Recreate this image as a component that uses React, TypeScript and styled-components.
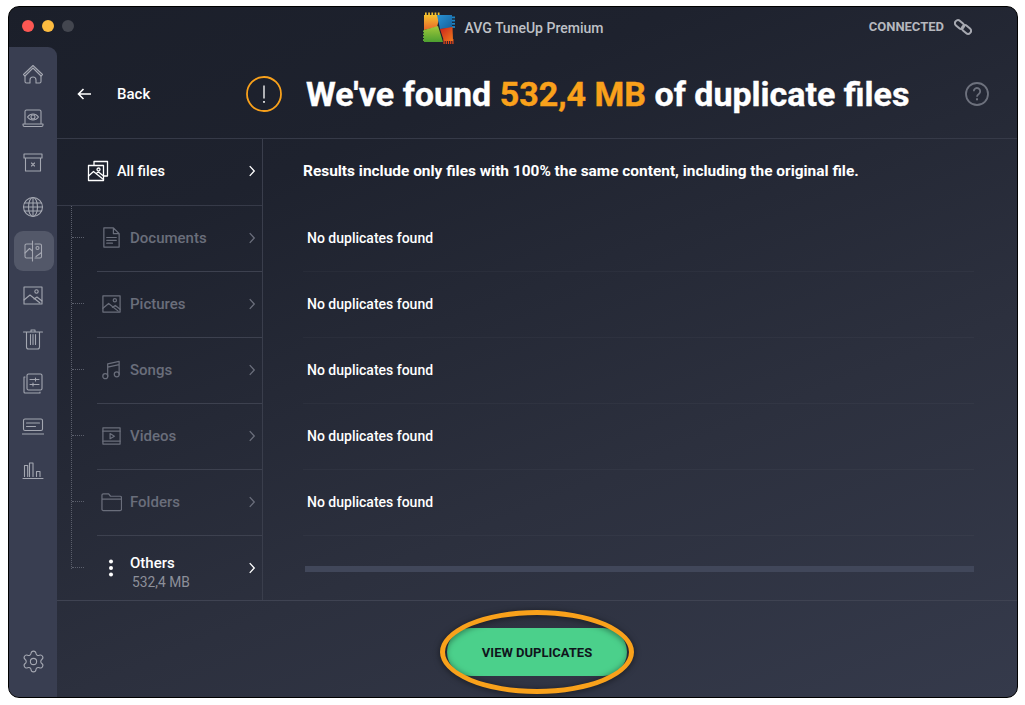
import React from "react";
import styled, { createGlobalStyle } from "styled-components";
import { Settings } from "lucide-react";

const Global = createGlobalStyle`
  html, body { margin: 0; padding: 0; background: #fff; }
  body { width: 1025px; height: 705px; overflow: hidden; font-family: Roboto, "Liberation Sans", sans-serif; }
  *, *::before, *::after { box-sizing: border-box; }
`;

const Page = styled.div`
  width: 1025px;
  height: 705px;
  padding: 6px 7px 7px 8px;
`;
const Win = styled.div`
  position: relative;
  width: 1010px;
  height: 692px;
  border: 1px solid #000;
  border-radius: 11px;
  overflow: hidden;
  display: flex;
  flex-direction: column;
  background: linear-gradient(158deg, #1b1f2a 0%, #1e222e 25%, #2c303e 65%, #353a4b 100%);
`;
const TitleBar = styled.div`
  height: 40px;
  flex: none;
  display: grid;
  grid-template-columns: 1fr auto 1fr;
  align-items: center;
`;
const Lights = styled.div`
  display: flex;
  gap: 8px;
  padding: 0 0 2px 13px;
`;
const Light = styled.span<{ $c: string }>`
  width: 12px;
  height: 12px;
  border-radius: 50%;
  background: ${(p) => p.$c};
`;
const Brand = styled.div`
  display: flex;
  align-items: center;
  gap: 10px;
  padding-top: 2px;
  font-size: 14px;
  font-weight: 500;
  color: #bfc1c7;
`;
const Status = styled.div`
  display: flex;
  justify-content: flex-end;
  align-items: center;
  gap: 10px;
  padding: 0 45px 1px 0;
  font-size: 13px;
  font-weight: 700;
  color: #b6b8be;
`;
const Body = styled.div`
  flex: 1;
  display: flex;
  min-height: 0;
`;
const Sidebar = styled.nav`
  width: 48px;
  flex: none;
  display: flex;
  flex-direction: column;
  align-items: center;
  gap: 4px;
  padding: 8px 0 16px 2px;
  background: #393e51;
  border-top-right-radius: 9px;
`;
const NavItem = styled.div<{ $active?: boolean }>`
  width: 40px;
  height: 40px;
  flex: none;
  display: flex;
  align-items: center;
  justify-content: center;
  padding-right: 2px;
  border-radius: 9px;
  color: #a4a7b1;
  background: ${(p) => (p.$active ? "#535869" : "transparent")};
`;
const NavBottom = styled(NavItem)`
  margin-top: auto;
`;
const Main = styled.div`
  flex: 1;
  min-width: 0;
  display: flex;
  flex-direction: column;
`;
const Header = styled.header`
  height: 92px;
  flex: none;
  display: flex;
  align-items: center;
  padding-top: 2px;
  border-bottom: 1px solid #363a48;
  color: #fff;
`;
const Back = styled.div`
  width: 189px;
  flex: none;
  display: flex;
  align-items: center;
  gap: 26px;
  padding-left: 20px;
  font-size: 15px;
  font-weight: 500;
`;
const Title = styled.h1`
  flex: 1;
  margin: 0 0 0 24px;
  font-size: 34px;
  line-height: 40px;
  font-weight: 700;
  white-space: nowrap;
  -webkit-text-stroke: 0.4px currentColor;
`;
const Accent = styled.span`
  color: #f9a11b;
`;
const Help = styled.div`
  margin-right: 28px;
  display: flex;
`;
const Content = styled.div`
  height: 461px;
  flex: none;
  display: flex;
`;
const Files = styled.div`
  width: 206px;
  flex: none;
  border-right: 1px solid #3a3e4c;
  display: flex;
  flex-direction: column;
`;
const AllRow = styled.div`
  height: 67px;
  flex: none;
  display: flex;
  align-items: center;
  padding: 0 6px 2px 30px;
  gap: 8px;
  color: #fff;
  font-size: 14.5px;
  font-weight: 500;
  border-bottom: 1px solid #363a48;
`;
const SubList = styled.div`
  position: relative;
  flex: 1;
  display: flex;
  flex-direction: column;
  &::before {
    content: "";
    position: absolute;
    left: 14px;
    top: 0;
    bottom: 33px;
    border-left: 1px dotted #5b5f6c;
  }
`;
const SubRow = styled.div<{ $on?: boolean }>`
  position: relative;
  height: 66px;
  flex: none;
  margin-left: 40px;
  padding: 0 6px 2px 5px;
  display: flex;
  align-items: center;
  gap: 10px;
  font-size: 15px;
  font-weight: 500;
  color: ${(p) => (p.$on ? "#fff" : "#6a6e7b")};
  border-bottom: ${(p) => (p.$on ? "none" : "1px solid #3d414f")};
  &::before {
    content: "";
    position: absolute;
    left: -25px;
    width: 12px;
    top: 31px;
    border-top: 1px dotted #5b5f6c;
  }
`;
const IconBox = styled.span`
  width: 18px;
  flex: none;
  display: flex;
  justify-content: center;
  & > svg {
    flex: none;
  }
`;
const Grow = styled.div`
  flex: 1;
`;
const OthersLabel = styled(Grow)`
  margin-top: 8px;
`;
const Size = styled.div`
  margin: 2px 0 0 2px;
  font-size: 13.8px;
  color: #8d909a;
  font-weight: 400;
`;
const Results = styled.div`
  flex: 1;
  min-width: 0;
  padding: 0 43px 0 40px;
  display: flex;
  flex-direction: column;
  color: #fff;
`;
const Note = styled.div`
  height: 67px;
  flex: none;
  display: flex;
  align-items: center;
  padding-bottom: 4px;
  font-size: 15.43px;
  font-weight: 700;
  white-space: nowrap;
`;
const ResultRow = styled.div`
  height: 66px;
  flex: none;
  display: flex;
  align-items: center;
  padding: 0 0 2px 4px;
  font-size: 14px;
  font-weight: 500;
  border-bottom: 1px solid rgba(255, 255, 255, 0.03);
`;
const Track = styled.div`
  height: 6px;
  margin: 30px 0 0 2px;
  background: #41475a;
`;
const Footer = styled.footer`
  flex: 1;
  display: flex;
  align-items: center;
  justify-content: center;
  padding-top: 6px;
  border-top: 1px solid #3f4352;
`;
const CTA = styled.div`
  position: relative;
  width: 180px;
  height: 48px;
  border-radius: 24px;
  background: #4bd08b;
  color: #10151c;
  font-size: 13px;
  font-weight: 700;
  display: flex;
  align-items: center;
  justify-content: center;
  &::after {
    content: "";
    position: absolute;
    left: -7px;
    top: -18px;
    width: 194px;
    height: 84px;
    border: 5px solid #f9a11b;
    border-radius: 50%;
    filter: drop-shadow(0 1px 3px rgba(0, 0, 0, 0.55));
  }
`;

const paths: Record<string, React.ReactNode> = {
  home: (
    <>
      <path d="M1.500 10.500 11 1.500l9.500 9L19 12l-8-8-8 8z" />
      <path d="M3 12v5.500A1.500 1.500 0 0 0 4.500 19H8v-3a3 3 0 0 1 6 0v3h3.500a1.500 1.500 0 0 0 1.500-1.500V12" />
    </>
  ),
  scan: (
    <>
      <path d="M3 15V3.500A1.500 1.500 0 0 1 4.500 2h13A1.500 1.500 0 0 1 19 3.500V15M1 16h20v1a1.500 1.500 0 0 1-1.500 1.500h-17A1.500 1.500 0 0 1 1 17z" />
      <path d="M5.500 9C7 7 9 6 11 6s4 1 5.500 3c-1.500 2-3.500 3-5.500 3s-4-1-5.500-3z" />
      <circle cx="11" cy="9" r="2" />
    </>
  ),
  box: (
    <>
      <path d="M2 2h18v4H2zM3.500 6v13h15V6" />
      <path d="M9.500 11l3 3M12.500 11l-3 3" />
    </>
  ),
  globe: (
    <>
      <circle cx="11" cy="11" r="9.500" />
      <ellipse cx="11" cy="11" rx="4.500" ry="9.500" />
      <path d="M11 1.500v19M2.500 7h17M1.500 11h19M2.500 15h17" />
    </>
  ),
  dup: (
    <>
      <path d="M10.500 1v20M10.500 4H4.500A1.500 1.500 0 0 0 3 5.500v11A1.500 1.500 0 0 0 4.500 18h6M13 4h5a1.500 1.500 0 0 1 1.500 1.500v11A1.500 1.500 0 0 1 18 18h-5" />
      <circle cx="15.500" cy="8" r="1.500" />
      <path d="M3 13l4.500-4.500 3 2.500M14 16.500l5.500-4" />
    </>
  ),
  photo: (
    <>
      <rect x="2" y="3" width="18" height="17" />
      <circle cx="14.500" cy="7.500" r="1.700" />
      <path d="M2 16l6-5 10 8M12 15l3-2 5 4" />
    </>
  ),
  trash: (
    <>
      <path d="M1.500 4h19M9 4V2h4v2M4.500 4v15a2 2 0 0 0 2 2h9a2 2 0 0 0 2-2V4" />
      <path d="M8.500 6.500v10M11 6.500v10M13.500 6.500v10" />
    </>
  ),
  tune: (
    <>
      <path d="M3 5H2v15a1 1 0 0 0 1 1h15v-1" />
      <rect x="5" y="2" width="15" height="16" rx="1.500" />
      <path d="M8 7.500h9M8 12.500h9M13.500 6v3M11 11v3" />
    </>
  ),
  laptop: (
    <>
      <rect x="1.500" y="3" width="19" height="11.500" rx="1.500" />
      <path d="M4.500 7h13M4.500 10.500h9M0 18h22" />
    </>
  ),
  bars: <path d="M1 18.500h20M2.500 16.500V5.500h3.200v11M7.500 16.500V3H11v13.500M14.500 16.500v-5h3.500v5" />,
  doc: (
    <>
      <path d="M13 1H3v20h16V7zM13 1v6h6" />
      <path d="M6 11h10M6 14h10M6 17h6" />
    </>
  ),
  song: (
    <>
      <path d="M7 18V5l12-2.500V16M7 8.500l12-2.500" />
      <circle cx="4.500" cy="18" r="2.600" />
      <circle cx="16.500" cy="16" r="2.600" />
    </>
  ),
  video: (
    <>
      <rect x="2" y="3" width="18" height="17" />
      <path d="M2 6.500h18M2 17h18M9.500 9v5.500l4.500-2.700z" />
    </>
  ),
  folder: <path d="M1 19V4.500A1.500 1.500 0 0 1 2.500 3H8l2 2.500h10A1.500 1.500 0 0 1 21.500 7v12A1.500 1.500 0 0 1 20 20.500H2.500A1.500 1.500 0 0 1 1 19zM1 8.500h20.500" />,
  all: (
    <>
      <path d="M7 5V1.500h13.500V16H17" />
      <rect x="1.500" y="5.500" width="15" height="15" />
      <circle cx="11.500" cy="9.500" r="1.500" />
      <path d="M1.500 16l5-4.500 10 8M9 13.500l2.500-1.500 5 4" />
    </>
  ),
  chevron: <path d="M2 1.500 8 8l-6 6.500" />,
};

const Icon = ({ name, size = 22, w = 1.1 }: { name: string; size?: number; w?: number }) => (
  <svg width={size} height={size} viewBox="0 0 22 22" fill="none" stroke="currentColor" strokeWidth={w} strokeLinejoin="round" strokeLinecap="round">
    {paths[name]}
  </svg>
);

const Chevron = () => (
  <svg width="8" height="12" viewBox="0 0 10 16" fill="none" stroke="currentColor" strokeWidth="1.800">
    {paths.chevron}
  </svg>
);

const LogoTeeth = ({ pts, c }: { pts: number[][]; c: string }) => (
  <>
    {pts.map(([x, y, w, h], i) => (
      <rect key={i} x={x} y={y} width={w} height={h} fill={c} />
    ))}
  </>
);

const AvgLogo = () => {
  const range = (n: number, f: (i: number) => number[]) => Array.from({ length: n }, (_, i) => f(i));
  return (
    <svg width="32" height="32" viewBox="0 0 32 32">
      <defs>
        <linearGradient id="avgO" x1="0" y1="0" x2="0" y2="1">
          <stop offset="0" stopColor="#f5c12e" />
          <stop offset="1" stopColor="#e8662a" />
        </linearGradient>
        <linearGradient id="avgB" x1="0" y1="0" x2="1" y2="1">
          <stop offset="0" stopColor="#2a93d5" />
          <stop offset="1" stopColor="#14609c" />
        </linearGradient>
        <linearGradient id="avgG" x1="0" y1="0" x2="0" y2="1">
          <stop offset="0" stopColor="#a3c93a" />
          <stop offset="1" stopColor="#4c9f30" />
        </linearGradient>
        <linearGradient id="avgR" x1="0" y1="0" x2="1" y2="1">
          <stop offset="0" stopColor="#c9201c" />
          <stop offset="1" stopColor="#f07a1c" />
        </linearGradient>
      </defs>
      <LogoTeeth pts={range(5, (i) => [2 + i * 3.200, 0.500, 1.700, 4])} c="#f5c12e" />
      <LogoTeeth pts={range(4, (i) => [28, 4.500 + i * 3.200, 4, 1.800])} c="#1c86c6" />
      <LogoTeeth pts={range(5, (i) => [20.500 + i * 2.200, 27, 1.200, 5])} c="#e8481c" />
      <LogoTeeth pts={range(4, (i) => [0, 18.500 + i * 2.900, 3, 1.700])} c="#6bb33c" />
      <polygon points="1,3 17,3 14,15 1,18" fill="url(#avgO)" />
      <polygon points="14,3 29,3 29,16 17,17" fill="url(#avgB)" />
      <polygon points="1,18 15,14 20,30 1,30" fill="url(#avgG)" />
      <polygon points="17,17 29.500,15 30,29 21,29" fill="url(#avgR)" />
    </svg>
  );
};

const LinkIcon = () => (
  <svg width="18" height="18" viewBox="0 0 18 18" fill="none" stroke="#a6a8b0" strokeWidth="2">
    <rect x="0.500" y="3.500" width="10" height="6" rx="3" transform="rotate(42 5.500 6.500)" />
    <rect x="7.500" y="8.500" width="10" height="6" rx="3" transform="rotate(42 12.500 11.500)" />
  </svg>
);

const Warn = () => (
  <svg width="36" height="36" viewBox="0 0 36 36" fill="none">
    <circle cx="18" cy="18" r="17" stroke="#f9a11b" strokeWidth="1.800" />
    <path d="M18 9.500v13" stroke="#fff" strokeWidth="1.300" />
    <rect x="17.200" y="25" width="1.600" height="1.800" fill="#fff" />
  </svg>
);

const HelpIcon = () => (
  <svg width="24" height="24" viewBox="0 0 24 24" fill="none">
    <circle cx="12" cy="12" r="11" stroke="#6d717d" strokeWidth="1.800" />
    <path d="M8.800 9.300a3.200 3.200 0 1 1 5 2.600c-1.100.8-1.800 1.400-1.800 2.800" stroke="#6d717d" strokeWidth="1.800" />
    <rect x="11" y="16.300" width="2" height="2" fill="#6d717d" />
  </svg>
);

const BackArrow = () => (
  <svg width="14" height="12" viewBox="0 0 14 12" fill="none" stroke="#fff" strokeWidth="1.600">
    <path d="M14 6H1.500M6.500 1 1.500 6l5 5" />
  </svg>
);

const Dots = () => (
  <svg width="6" height="18" viewBox="0 0 6 18" fill="#fff">
    <circle cx="3" cy="2.500" r="2" />
    <circle cx="3" cy="9" r="2" />
    <circle cx="3" cy="15.500" r="2" />
  </svg>
);

const nav = ["home", "scan", "box", "globe", "dup", "photo", "trash", "tune", "laptop", "bars"];
const subs: [string, string][] = [
  ["doc", "Documents"],
  ["photo", "Pictures"],
  ["song", "Songs"],
  ["video", "Videos"],
  ["folder", "Folders"],
];

export default function App() {
  return (
    <Page>
      <Global />
      <Win>
        <TitleBar>
          <Lights>
            <Light $c="#fc5753" />
            <Light $c="#fdbc40" />
            <Light $c="#43464f" />
          </Lights>
          <Brand>
            <AvgLogo />
            AVG TuneUp Premium
          </Brand>
          <Status>
            CONNECTED
            <LinkIcon />
          </Status>
        </TitleBar>
        <Body>
          <Sidebar>
            {nav.map((n) => (
              <NavItem key={n} $active={n === "dup"}>
                <Icon name={n} />
              </NavItem>
            ))}
            <NavBottom>
              <Settings size={25} strokeWidth={1.05} />
            </NavBottom>
          </Sidebar>
          <Main>
            <Header>
              <Back>
                <BackArrow />
                Back
              </Back>
              <Warn />
              <Title>
                We've found <Accent>532,4 MB</Accent> of duplicate files
              </Title>
              <Help>
                <HelpIcon />
              </Help>
            </Header>
            <Content>
              <Files>
                <AllRow>
                  <Icon name="all" w={1.3} />
                  <Grow>All files</Grow>
                  <Chevron />
                </AllRow>
                <SubList>
                  {subs.map(([ic, label]) => (
                    <SubRow key={label}>
                      <IconBox>
                        <Icon name={ic} size={21} w={1.3} />
                      </IconBox>
                      <Grow>{label}</Grow>
                      <Chevron />
                    </SubRow>
                  ))}
                  <SubRow $on>
                    <IconBox>
                      <Dots />
                    </IconBox>
                    <OthersLabel>
                      Others
                      <Size>532,4 MB</Size>
                    </OthersLabel>
                    <Chevron />
                  </SubRow>
                </SubList>
              </Files>
              <Results>
                <Note>Results include only files with 100% the same content, including the original file.</Note>
                {subs.map(([, label]) => (
                  <ResultRow key={label}>No duplicates found</ResultRow>
                ))}
                <Track />
              </Results>
            </Content>
            <Footer>
              <CTA>VIEW DUPLICATES</CTA>
            </Footer>
          </Main>
        </Body>
      </Win>
    </Page>
  );
}
